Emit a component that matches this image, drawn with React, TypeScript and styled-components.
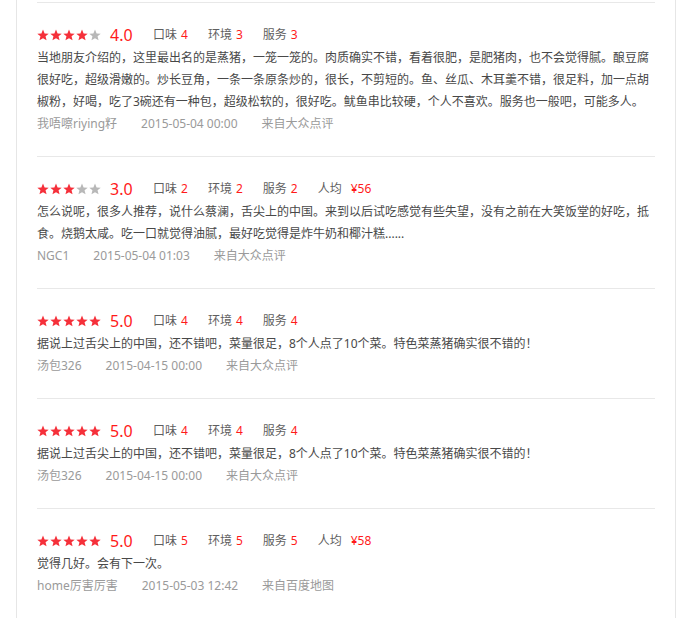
import * as React from "react";
import styled, { createGlobalStyle } from "styled-components";

const GlobalStyle = createGlobalStyle`
    body {
        margin: 0;
        background-color: #ffffff;
        font-family: "Noto Sans", "Noto Sans CJK SC", sans-serif;
        font-size: 12px;
    }
`;

const Panel = styled.div`
    margin-left: 16px;
    width: 618px;
    min-height: 100vh;
    padding: 2px 20px 0 20px;
    border-left: 1px solid #e6e6e6;
    border-right: 1px solid #e6e6e6;
`;

const ReviewItem = styled.div`
    border-top: 1px solid #e8e8e8;
    padding: 20px 0 21px 0;
`;

const HeaderRow = styled.div`
    height: 24px;
    display: flex;
    flex-direction: row;
    align-items: center;
`;

const Stars = styled.div`
    display: flex;
    flex-direction: row;
    gap: 1px;
    margin-right: 9px;
`;

const Score = styled.span`
    width: 43px;
    font-size: 16px;
    color: #ff1a1a;
    line-height: 24px;
`;

const SubScores = styled.div`
    display: flex;
    flex-direction: row;
    gap: 20px;
`;

const SubScore = styled.span`
    color: #5f5f5f;
    line-height: 24px;
`;

const SubValue = styled.span<{ $wide?: boolean }>`
    color: #ff1a1a;
    margin-left: ${p => (p.$wide ? 9 : 4)}px;
`;

const Body = styled.p`
    margin: 0;
    color: #484848;
    line-height: 22px;
`;

const MetaRow = styled.div`
    display: flex;
    flex-direction: row;
    gap: 24px;
    color: #9a9a9a;
    line-height: 22px;
`;

interface IReview {
    id: number;
    stars: number;
    taste: number;
    env: number;
    service: number;
    price?: number;
    text: string;
    user: string;
    time: string;
    source: string;
}

const reviews: IReview[] = [
    {
        id: 1,
        stars: 4,
        taste: 4,
        env: 3,
        service: 3,
        text: "当地朋友介绍的，这里最出名的是蒸猪，一笼一笼的。肉质确实不错，看着很肥，是肥猪肉，也不会觉得腻。酿豆腐很好吃，超级滑嫩的。炒长豆角，一条一条原条炒的，很长，不剪短的。鱼、丝瓜、木耳羹不错，很足料，加一点胡椒粉，好喝，吃了3碗还有一种包，超级松软的，很好吃。鱿鱼串比较硬，个人不喜欢。服务也一般吧，可能多人。",
        user: "我唔嚓riying籽",
        time: "2015-05-04 00:00",
        source: "来自大众点评",
    },
    {
        id: 2,
        stars: 3,
        taste: 2,
        env: 2,
        service: 2,
        price: 56,
        text: "怎么说呢，很多人推荐，说什么蔡澜，舌尖上的中国。来到以后试吃感觉有些失望，没有之前在大笑饭堂的好吃，抵食。烧鹅太咸。吃一口就觉得油腻，最好吃觉得是炸牛奶和椰汁糕......",
        user: "NGC1",
        time: "2015-05-04 01:03",
        source: "来自大众点评",
    },
    {
        id: 3,
        stars: 5,
        taste: 4,
        env: 4,
        service: 4,
        text: "据说上过舌尖上的中国，还不错吧，菜量很足，8个人点了10个菜。特色菜蒸猪确实很不错的！",
        user: "汤包326",
        time: "2015-04-15 00:00",
        source: "来自大众点评",
    },
    {
        id: 4,
        stars: 5,
        taste: 4,
        env: 4,
        service: 4,
        text: "据说上过舌尖上的中国，还不错吧，菜量很足，8个人点了10个菜。特色菜蒸猪确实很不错的！",
        user: "汤包326",
        time: "2015-04-15 00:00",
        source: "来自大众点评",
    },
    {
        id: 5,
        stars: 5,
        taste: 5,
        env: 5,
        service: 5,
        price: 58,
        text: "觉得几好。会有下一次。",
        user: "home厉害厉害",
        time: "2015-05-03 12:42",
        source: "来自百度地图",
    },
];

const Star = ({ on }: { on: boolean }) => (
    <svg width={12} height={12} viewBox="0 0 24 24">
        <path
            d="M12 1.2l3.2 7.6 8.2.6-6.3 5.3 2 8-7.1-4.4-7.1 4.4 2-8L.6 9.4l8.2-.6z"
            fill={on ? "#f5303a" : "#b8b8b8"}
        />
    </svg>
);

const Review = ({ review }: { review: IReview }) => (
    <ReviewItem>
        <HeaderRow>
            <Stars>
                {[1, 2, 3, 4, 5].map(i => (
                    <Star key={i} on={i <= review.stars} />
                ))}
            </Stars>
            <Score>{review.stars.toFixed(1)}</Score>
            <SubScores>
                <SubScore>
                    口味<SubValue>{review.taste}</SubValue>
                </SubScore>
                <SubScore>
                    环境<SubValue>{review.env}</SubValue>
                </SubScore>
                <SubScore>
                    服务<SubValue>{review.service}</SubValue>
                </SubScore>
                {review.price !== undefined && (
                    <SubScore>
                        人均<SubValue $wide>¥{review.price}</SubValue>
                    </SubScore>
                )}
            </SubScores>
        </HeaderRow>
        <Body>{review.text}</Body>
        <MetaRow>
            <span>{review.user}</span>
            <span>{review.time}</span>
            <span>{review.source}</span>
        </MetaRow>
    </ReviewItem>
);

export default function App() {
    return (
        <>
            <GlobalStyle />
            <Panel>
                {reviews.map(r => (
                    <Review key={r.id} review={r} />
                ))}
            </Panel>
        </>
    );
}
